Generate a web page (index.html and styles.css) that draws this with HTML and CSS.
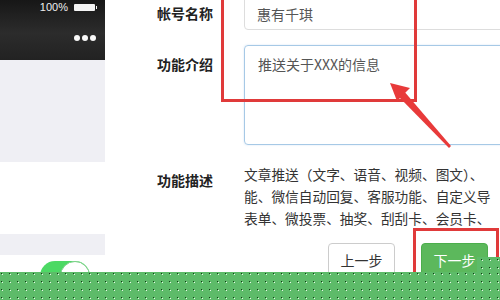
FILE: index.html
```html
<!DOCTYPE html>
<html lang="zh-CN">
<head>
<meta charset="utf-8">
<link rel="stylesheet" href="styles.css">
</head>
<body>
<div class="page">
  <aside class="phone">
    <div class="topbar">
      <div class="status">
        <span class="pct">100%</span>
        <span class="battery"><span class="nub"></span></span>
      </div>
      <div class="more"><i></i><i></i><i></i></div>
    </div>
    <div class="cell gray tall"></div>
    <div class="cell white mid"></div>
    <div class="cell gray thin"></div>
    <div class="cell white rest">
      <span class="toggle"><span class="knob"></span></span>
    </div>
  </aside>

  <main class="form">
    <div class="row row-name">
      <label class="label">帐号名称</label>
      <div class="input">惠有千琪</div>
    </div>
    <div class="row row-intro">
      <label class="label pad-intro">功能介绍</label>
      <div class="textarea">推送关于XXX的信息</div>
    </div>
    <div class="row row-desc">
      <label class="label pad-desc">功能描述</label>
      <div class="desc">
        <span class="line">文章推送（文字、语音、视频、图文）、</span>
        <span class="line">能、微信自动回复、客服功能、自定义导</span>
        <span class="line">表单、微投票、抽奖、刮刮卡、会员卡、</span>
      </div>
    </div>
    <div class="row row-btns">
      <span class="label"></span>
      <div class="btns">
        <button class="btn btn-prev">上一步</button>
        <button class="btn btn-next">下一步</button>
      </div>
    </div>
  </main>

  <div class="mark mark-top"></div>
  <div class="mark mark-btn"></div>
  <svg class="arrow" width="500" height="300" viewBox="0 0 500 300">
    <polygon points="398,96 403,90 451,146 449,148" fill="#e83a3a"/>
    <polygon points="390,83 410,88 397,101" fill="#e83a3a"/>
  </svg>
  <div class="band band-main"></div>
  <div class="band band-step"></div>
</div>
</body>
</html>
```

FILE: styles.css
```css
html, body {
  margin: 0;
  padding: 0;
  background: #fff;
}
.page {
  position: relative;
  width: 500px;
  height: 300px;
  overflow: hidden;
  display: flex;
  font-family: "Noto Sans CJK SC", "Noto Sans", sans-serif;
}

/* phone panel */
.phone {
  width: 105px;
  flex: none;
  display: flex;
  flex-direction: column;
}
.topbar {
  height: 60px;
  background: linear-gradient(#171717, #2c2c2c 55%, #222);
  display: flex;
  flex-direction: column;
  align-items: flex-end;
  padding-right: 8px;
}
.status {
  height: 14px;
  display: flex;
  align-items: center;
  gap: 6px;
}
.pct {
  font-family: "Liberation Sans", Arial, sans-serif;
  font-size: 11px;
  color: #eee;
  line-height: 14px;
}
.battery {
  position: relative;
  width: 21px;
  height: 7px;
  background: #f4f4f4;
  border-radius: 1px;
  margin-right: 2px;
}
.nub {
  position: absolute;
  right: -2px;
  top: 2px;
  width: 1.5px;
  height: 3px;
  background: #f4f4f4;
}
.more {
  margin-top: 21px;
  display: flex;
  gap: 2px;
  padding-right: 1px;
}
.more i {
  width: 6px;
  height: 6px;
  border-radius: 50%;
  background: #fafafa;
}
.cell.gray { background: #efeff4; }
.cell.white { background: #fff; }
.tall { height: 102px; }
.mid { height: 72px; }
.thin { height: 21px; }
.rest {
  flex: 1;
  padding: 6px 0 0 40px;
}
.toggle {
  display: block;
  position: relative;
  width: 50px;
  height: 30px;
  border-radius: 15px;
  background: #4cd964;
}
.knob {
  position: absolute;
  right: 0;
  top: 0;
  width: 28px;
  height: 28px;
  border-radius: 50%;
  background: #fff;
  border: 1px solid #7ccf88;
}

/* form */
.form {
  width: 480px;
  flex: none;
  margin-top: -4px;
  padding-left: 52px;
  display: flex;
  flex-direction: column;
}
.row {
  display: flex;
  align-items: flex-start;
}
.label {
  width: 87px;
  flex: none;
  font-size: 14px;
  font-weight: bold;
  color: #222;
  line-height: 20px;
}
.row-name { align-items: center; }
.input {
  width: 300px;
  height: 32px;
  border: 1px solid #ddd;
  border-radius: 4px;
  padding-left: 12px;
  font-size: 14px;
  color: #555;
  line-height: 34px;
}
.row-intro { margin-top: 15px; }
.pad-intro { padding-top: 9px; }
.textarea {
  width: 300px;
  height: 90px;
  border: 1px solid #a6c9e6;
  border-radius: 4px;
  padding: 8px 0 0 13px;
  font-size: 14px;
  color: #555;
  line-height: 20px;
  box-shadow: 0 0 2px rgba(120, 170, 220, 0.35);
}
.row-desc { margin-top: 18px; }
.pad-desc { padding-top: 7px; }
.desc {
  font-size: 13.7px;
  color: #333;
  line-height: 22px;
  white-space: nowrap;
}
.line { display: block; }
.row-btns { margin-top: 14px; }
.btns {
  display: flex;
  gap: 26px;
  padding-left: 84px;
}
.btn {
  width: 67px;
  height: 34px;
  border-radius: 4px;
  font-family: "Noto Sans CJK SC", sans-serif;
  font-size: 14px;
  padding: 0;
}
.btn-prev {
  background: #fff;
  border: 1px solid #ccc;
  color: #333;
}
.btn-next {
  background: #5cb85c;
  border: 1px solid #4cae4c;
  color: #fff;
}

/* annotations */
.mark {
  position: absolute;
  border: 3px solid #e03a3a;
  box-sizing: border-box;
}
.mark-top {
  left: 221px;
  top: -10px;
  width: 196px;
  height: 112px;
}
.mark-btn {
  left: 413px;
  top: 228px;
  width: 86px;
  height: 90px;
}
.arrow {
  position: absolute;
  left: 0;
  top: 0;
}
.band {
  position: absolute;
  background-color: #5dbb69;
  background-image:
    radial-gradient(circle at 1.5px 1.5px, #143a16 0.6px, transparent 1px),
    radial-gradient(circle at 2.6px 2.6px, #e8f8e8 0.5px, transparent 0.9px);
  background-size: 8px 8px;
}
.band-main {
  left: 0;
  top: 272px;
  width: 500px;
  height: 28px;
}
.band-step {
  left: 477px;
  top: 257px;
  width: 23px;
  height: 15px;
  background-position: 3px 1px;
}
```
